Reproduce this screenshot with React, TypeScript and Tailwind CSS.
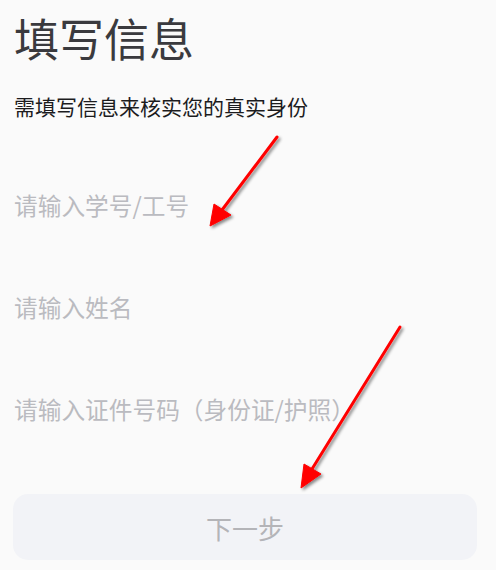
const FONT = { fontFamily: '"Noto Sans CJK SC", "Noto Sans", sans-serif' }

const FIELDS = ['请输入学号/工号', '请输入姓名', '请输入证件号码（身份证/护照）']

export default function App() {
  return (
    <div className="relative min-h-[570px] bg-[#fafafa] px-[14px]" style={FONT}>
      <h1 className="pt-[15px] text-[45px] leading-[45px] font-normal text-[#3a3a3e]">填写信息</h1>
      <p className="mt-[36px] text-[21px] leading-[21px] text-[#1c1c1e]">需填写信息来核实您的真实身份</p>

      {/* ── Form fields ─────────────────────────────── */}
      <div className="mt-[37px] flex flex-col">
        {FIELDS.map(f => (
          <div key={f} className="h-[102px] flex items-center">
            <input
              placeholder={f}
              className="w-full bg-transparent outline-none text-[23.7px] leading-none text-[#333] placeholder:text-[#babbc0]"
            />
          </div>
        ))}
      </div>

      <button className="mt-[34px] w-[464px] -ml-px h-[66px] rounded-[15px] bg-[#f2f3f7] text-[26px] text-[#b4b4b8]">
        下一步
      </button>

      {/* ── Annotation arrows ───────────────────────── */}
      <svg className="pointer-events-none absolute inset-0 w-[496px] h-[570px]" viewBox="0 0 496 570">
        <defs>
          <filter id="sh" x="-20%" y="-20%" width="140%" height="140%">
            <feDropShadow dx="2" dy="2" stdDeviation="1.6" floodColor="#000" floodOpacity="0.45" />
          </filter>
        </defs>
        <g filter="url(#sh)" fill="#ff0000" stroke="#ff0000">
          <line x1="277" y1="137" x2="222" y2="210" strokeWidth="3" strokeLinecap="round" />
          <polygon points="210,226 214,204 231,215" strokeWidth="1" strokeLinejoin="round" />
          <line x1="400" y1="327" x2="312" y2="469" strokeWidth="3" strokeLinecap="round" />
          <polygon points="301,488 304,464 321,474" strokeWidth="1" strokeLinejoin="round" />
        </g>
      </svg>
    </div>
  )
}
